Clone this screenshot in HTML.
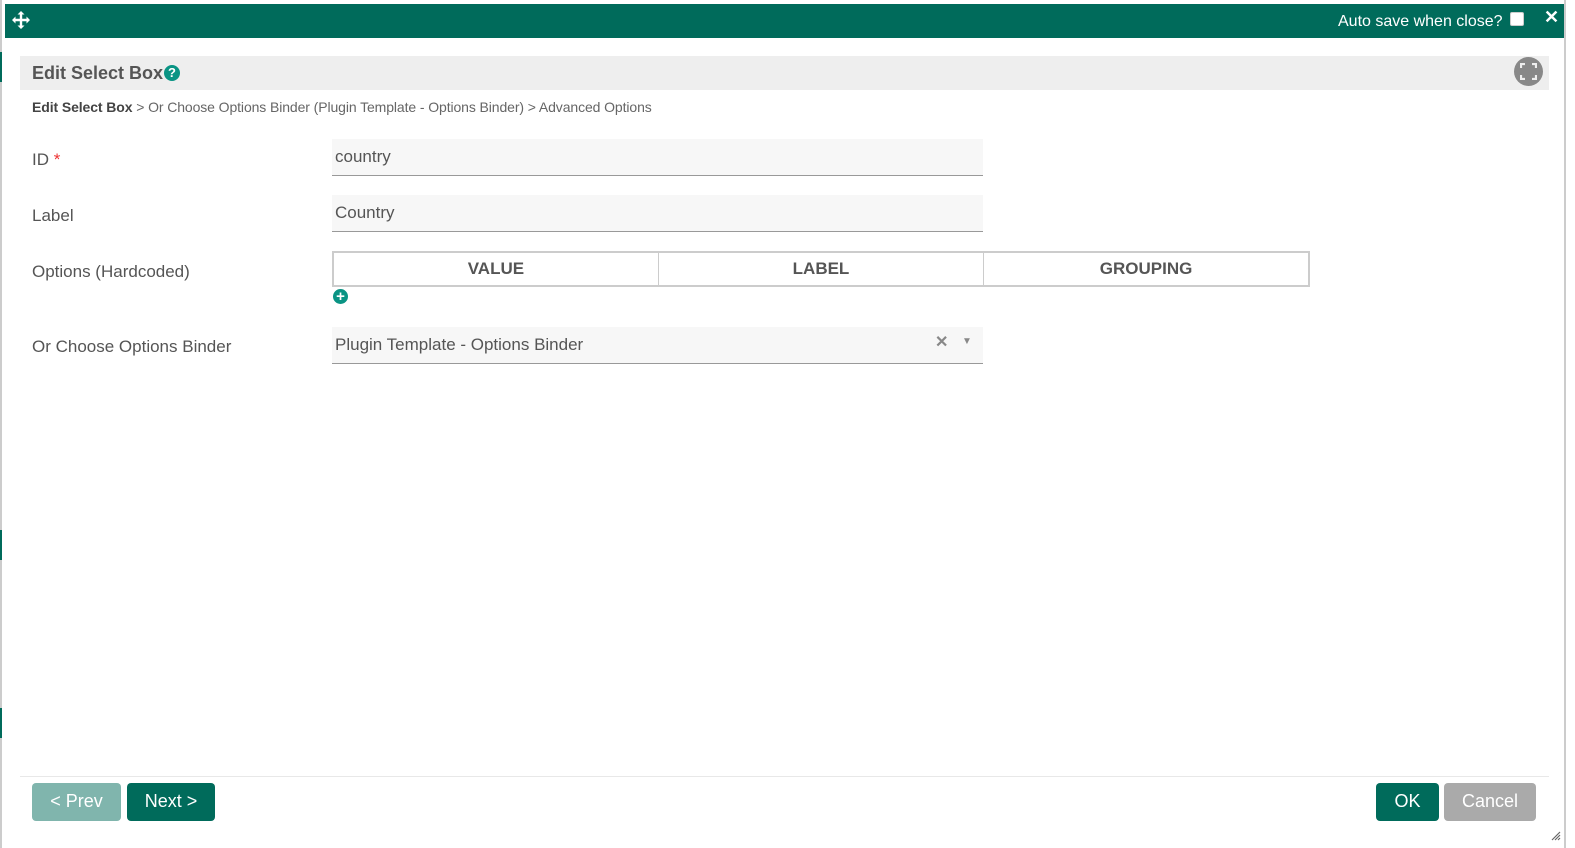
<!DOCTYPE html>
<html><head><meta charset="utf-8"><style>
*{box-sizing:border-box;margin:0;padding:0}
body{width:1575px;height:848px;overflow:hidden;background:#fff;font-family:"Liberation Sans",Arial,sans-serif;position:relative;color:#555}
.abs{position:absolute}
.top{left:5px;top:4px;width:1559px;height:34px;background:#006b5b}
.lbl{font-size:17px;color:#555}
.inp{left:332px;width:651px;height:37px;background:#f7f7f7;border-bottom:1px solid #999;font-size:17px;color:#555;padding:8px 0 0 3px}
.btn{top:783px;height:38px;border-radius:4px;color:#fff;font-size:18px;text-align:center;line-height:36px}
th{font-size:17px;color:#555;font-weight:bold;border:1px solid #ccc;height:34px;width:33.33%}
</style></head><body>
<div class="abs" style="left:0;top:0;width:2px;height:848px;background:#ccc"></div>
<div class="abs" style="left:0;top:52px;width:2px;height:30px;background:#006b5b"></div>
<div class="abs" style="left:0;top:530px;width:2px;height:30px;background:#006b5b"></div>
<div class="abs" style="left:0;top:708px;width:2px;height:30px;background:#006b5b"></div>
<div class="abs" style="left:1564px;top:0;width:2px;height:848px;background:#ccc"></div>
<div class="abs top"></div>
<svg class="abs" style="left:12px;top:11px" width="18" height="18" viewBox="0 0 18 18"><path d="M9 0L12.5 3.5H10.2V7.8H14.5V5.5L18 9L14.5 12.5V10.2H10.2V14.5H12.5L9 18L5.5 14.5H7.8V10.2H3.5V12.5L0 9L3.5 5.5V7.8H7.8V3.5H5.5Z" fill="#fff"/></svg>
<div class="abs" style="left:1338px;top:13px;color:#fff;font-size:16px">Auto save when close?</div>
<div class="abs" style="left:1510px;top:12px;width:14px;height:14px;background:#fff;border-radius:2px;border:1px solid #ccc"></div>
<div class="abs" style="left:1544px;top:7px;color:#fff;font-size:18px;font-weight:bold">✕</div>
<div class="abs" style="left:20px;top:56px;width:1529px;height:34px;background:#eee"></div>
<div class="abs" style="left:32px;top:63px;font-size:18px;font-weight:bold;color:#555">Edit Select Box</div>
<div class="abs" style="left:164px;top:65px;width:16px;height:16px;border-radius:50%;background:#0a9484;color:#fff;font-size:13px;font-weight:bold;text-align:center;line-height:16px">?</div>
<div class="abs" style="left:1514px;top:57px;width:29px;height:29px;border-radius:50%;background:#888"></div>
<svg class="abs" style="left:1520px;top:63px" width="17" height="17" viewBox="0 0 17 17" fill="none" stroke="#eee" stroke-width="2.2"><path d="M1 5V1H5M12 1H16V5M16 12V16H12M5 16H1V12"/></svg>
<div class="abs" style="left:32px;top:99px;font-size:14px;color:#666;letter-spacing:-0.1px"><b style="color:#444">Edit Select Box</b> &gt; Or Choose Options Binder (Plugin Template - Options Binder) &gt; Advanced Options</div>
<div class="abs lbl" style="left:32px;top:150px">ID <span style="color:#e33">*</span></div>
<div class="abs inp" style="top:139px">country</div>
<div class="abs lbl" style="left:32px;top:206px">Label</div>
<div class="abs inp" style="top:195px">Country</div>
<div class="abs lbl" style="left:32px;top:262px">Options (Hardcoded)</div>
<table class="abs" style="left:332px;top:251px;width:978px;border-collapse:collapse;border:2px solid #ccc;table-layout:fixed"><tr><th>VALUE</th><th>LABEL</th><th>GROUPING</th></tr></table>
<div class="abs" style="left:333px;top:289px;width:15px;height:15px;border-radius:50%;background:#0a9484;color:#fff;font-size:15px;font-weight:bold;text-align:center;line-height:15px">+</div>
<div class="abs lbl" style="left:32px;top:337px">Or Choose Options Binder</div>
<div class="abs inp" style="top:327px">Plugin Template - Options Binder</div>
<div class="abs" style="left:935px;top:332px;color:#888;font-size:16px;font-weight:bold">✕</div>
<div class="abs" style="left:962px;top:336px;color:#888;font-size:10px">▼</div>
<div class="abs" style="left:20px;top:776px;width:1529px;height:1px;background:#e8e8e8"></div>
<div class="abs btn" style="left:32px;width:89px;background:#80b5ad">&lt; Prev</div>
<div class="abs btn" style="left:127px;width:88px;background:#006b5b">Next &gt;</div>
<div class="abs btn" style="left:1376px;width:63px;background:#006b5b">OK</div>
<div class="abs btn" style="left:1444px;width:92px;background:#aaa">Cancel</div>
<svg class="abs" style="left:1551px;top:831px" width="10" height="10"><path d="M9 1L1 9M9 4L4 9M9 7L7 9" stroke="#666" stroke-width="1.2"/></svg>
</body></html>
